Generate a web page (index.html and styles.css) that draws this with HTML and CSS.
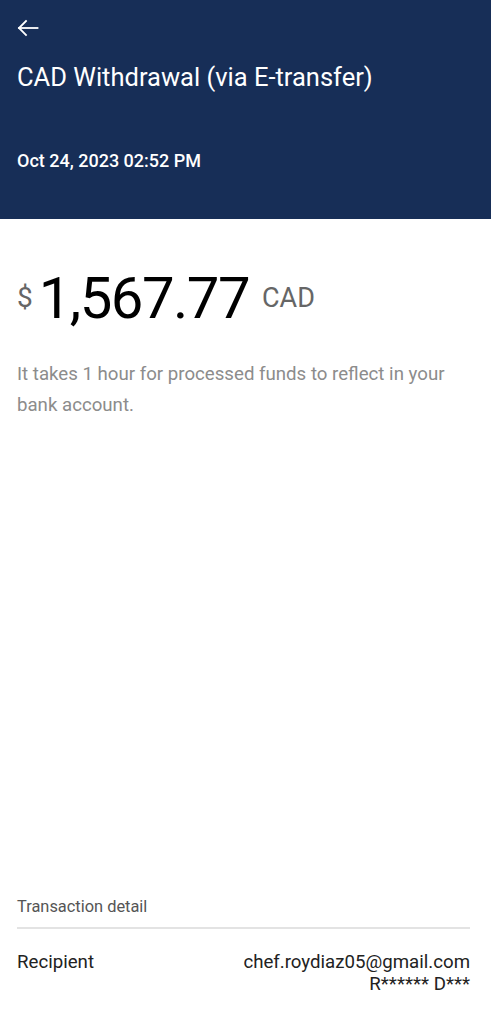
FILE: index.html
```html
<!DOCTYPE html>
<html>
<head>
<meta charset="utf-8">
<link rel="stylesheet" href="styles.css">
</head>
<body>
<div class="page">
  <header class="hero">
    <button class="back" aria-label="Back">
      <svg width="22" height="18" viewBox="0 0 22 18" fill="none" stroke="#fff" stroke-width="1.8" stroke-linecap="square">
        <path d="M2 9H20.5"/>
        <path d="M9 2L2 9L9 16"/>
      </svg>
    </button>
    <h1 class="title">CAD Withdrawal (via E-transfer)</h1>
    <div class="date">Oct 24, 2023 02:52 PM</div>
  </header>
  <main class="content">
    <div class="amount">
      <span class="cur">$</span><span class="value">1,567.77</span><span class="code">CAD</span>
    </div>
    <p class="note">It takes 1 hour for processed funds to reflect in your bank account.</p>
    <section class="detail">
      <div class="detail-head">Transaction detail</div>
      <div class="row">
        <div class="label">Recipient</div>
        <div class="val">
          <div>chef.roydiaz05@gmail.com</div>
          <div class="sub">R****** D***</div>
        </div>
      </div>
    </section>
  </main>
</div>
</body>
</html>
```
FILE: styles.css
```css
* { box-sizing: border-box; }
html, body { margin: 0; padding: 0; }
body {
  font-family: Roboto, "Liberation Sans", sans-serif;
  background: #fff;
  width: 491px;
  height: 1023px;
  overflow: hidden;
}
.page {
  display: flex;
  flex-direction: column;
  height: 1023px;
}
.hero {
  background: #172e57;
  color: #fff;
  height: 219px;
  padding: 19px 17px 0;
  display: flex;
  flex-direction: column;
}
.back {
  background: none;
  border: 0;
  padding: 0;
  width: 22px;
  height: 18px;
  display: block;
  cursor: pointer;
}
.back svg { display: block; }
.title {
  margin: 24px 0 0;
  font-size: 25.5px;
  font-weight: 400;
  line-height: 32px;
}
.date {
  margin-top: 57px;
  font-size: 18px;
  font-weight: 500;
  line-height: 22px;
}
.content {
  flex: 1;
  display: flex;
  flex-direction: column;
  padding: 0 21px 0 17px;
}
.amount {
  margin-top: 50px;
  display: flex;
  align-items: center;
}
.cur {
  font-size: 28px;
  line-height: 1;
  color: #666;
  margin-right: 6px;
}
.value {
  font-size: 58px;
  line-height: 1;
  color: #000;
  letter-spacing: -1.5px;
}
.code {
  font-size: 27px;
  line-height: 1;
  color: #666;
  margin-left: 13px;
}
.note {
  margin: 32px 0 0;
  font-size: 18.67px;
  line-height: 31px;
  color: #8c8c8c;
}
.detail {
  margin-top: auto;
  margin-bottom: 28px;
}
.detail-head {
  font-size: 16.4px;
  color: #555;
  line-height: 20px;
  padding-bottom: 10px;
  border-bottom: 2px solid #e3e3e3;
}
.row {
  display: flex;
  justify-content: space-between;
  align-items: flex-start;
  padding-top: 22px;
  font-size: 18.67px;
  color: #222;
  line-height: 22px;
}
.val { text-align: right; }
.sub { line-height: 22px; }
```
